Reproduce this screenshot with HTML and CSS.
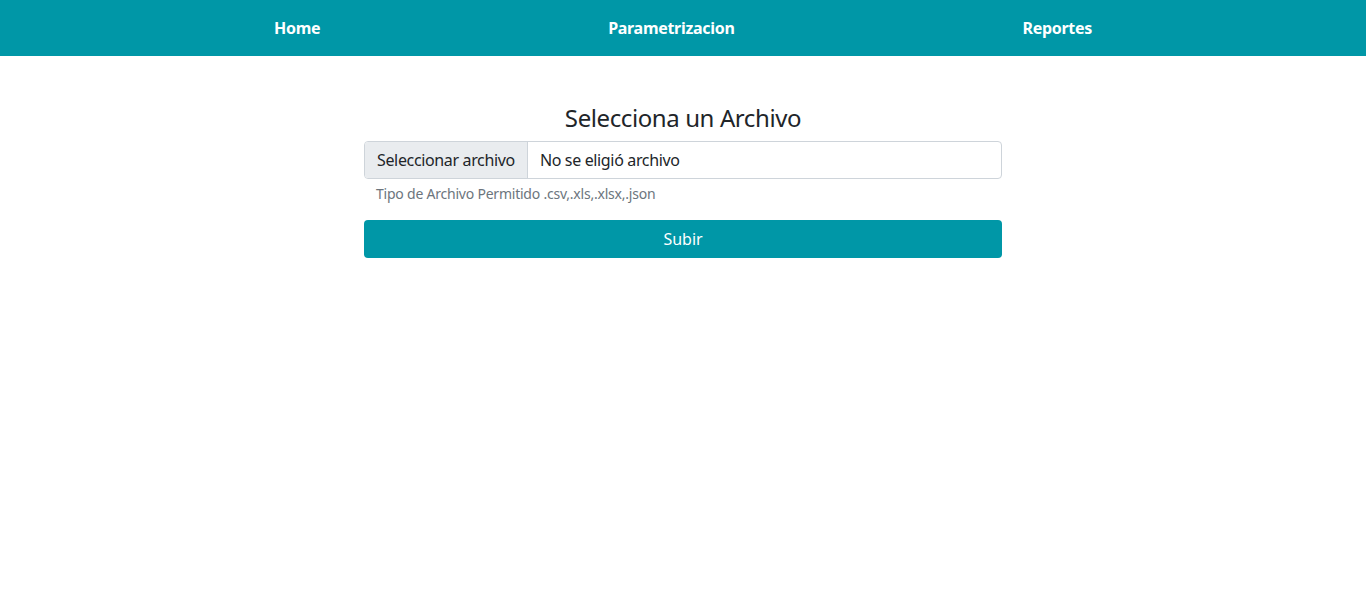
FILE: index.html
```html
<!DOCTYPE html>
<html lang="es">
<head>
<meta charset="utf-8">
<title>Subir archivo</title>
<link rel="stylesheet" href="styles.css">
</head>
<body>
<nav class="navbar">
  <a class="nav-link" href="#">Home</a>
  <a class="nav-link" href="#">Parametrizacion</a>
  <a class="nav-link" href="#">Reportes</a>
</nav>
<main class="content">
  <form class="upload-form">
    <h2 class="title">Selecciona un Archivo</h2>
    <div class="file-input">
      <span class="file-button">Seleccionar archivo</span>
      <span class="file-name">No se eligió archivo</span>
    </div>
    <div class="help-text">Tipo de Archivo Permitido .csv,.xls,.xlsx,.json</div>
    <button type="button" class="submit">Subir</button>
  </form>
</main>
</body>
</html>
```
FILE: styles.css
```css
* { box-sizing: border-box; }
body {
  margin: 0;
  font-family: "Noto Sans", "Open Sans", sans-serif;
  color: #212529;
  background: #fff;
}
.navbar {
  height: 56px;
  background: #0097a7;
  display: flex;
  align-items: center;
  justify-content: space-between;
  padding: 0 274px;
}
.nav-link {
  color: #fff;
  font-weight: 700;
  font-size: 16px;
  letter-spacing: -0.3px;
  text-decoration: none;
}
.content {
  display: flex;
  justify-content: center;
  padding-top: 48px;
}
.upload-form {
  width: 638px;
  display: flex;
  flex-direction: column;
}
.title {
  margin: 0 0 8px;
  font-size: 24px;
  font-weight: 400;
  letter-spacing: -0.4px;
  text-align: center;
  line-height: 1.2;
}
.file-input {
  display: flex;
  height: 38px;
  border: 1px solid #ced4da;
  border-radius: 4px;
  overflow: hidden;
  font-size: 16px;
  letter-spacing: -0.35px;
}
.file-button {
  background: #e9ecef;
  border-right: 1px solid #ced4da;
  padding: 0 12px;
  display: flex;
  align-items: center;
}
.file-name {
  padding: 0 12px;
  display: flex;
  align-items: center;
}
.help-text {
  margin-top: 4px;
  padding-left: 12px;
  font-size: 14px;
  letter-spacing: -0.22px;
  color: #6c757d;
  line-height: 21px;
}
.submit {
  margin-top: 16px;
  height: 38px;
  border: none;
  border-radius: 4px;
  background: #0097a7;
  color: #fff;
  font-family: inherit;
  font-size: 16px;
}
```
